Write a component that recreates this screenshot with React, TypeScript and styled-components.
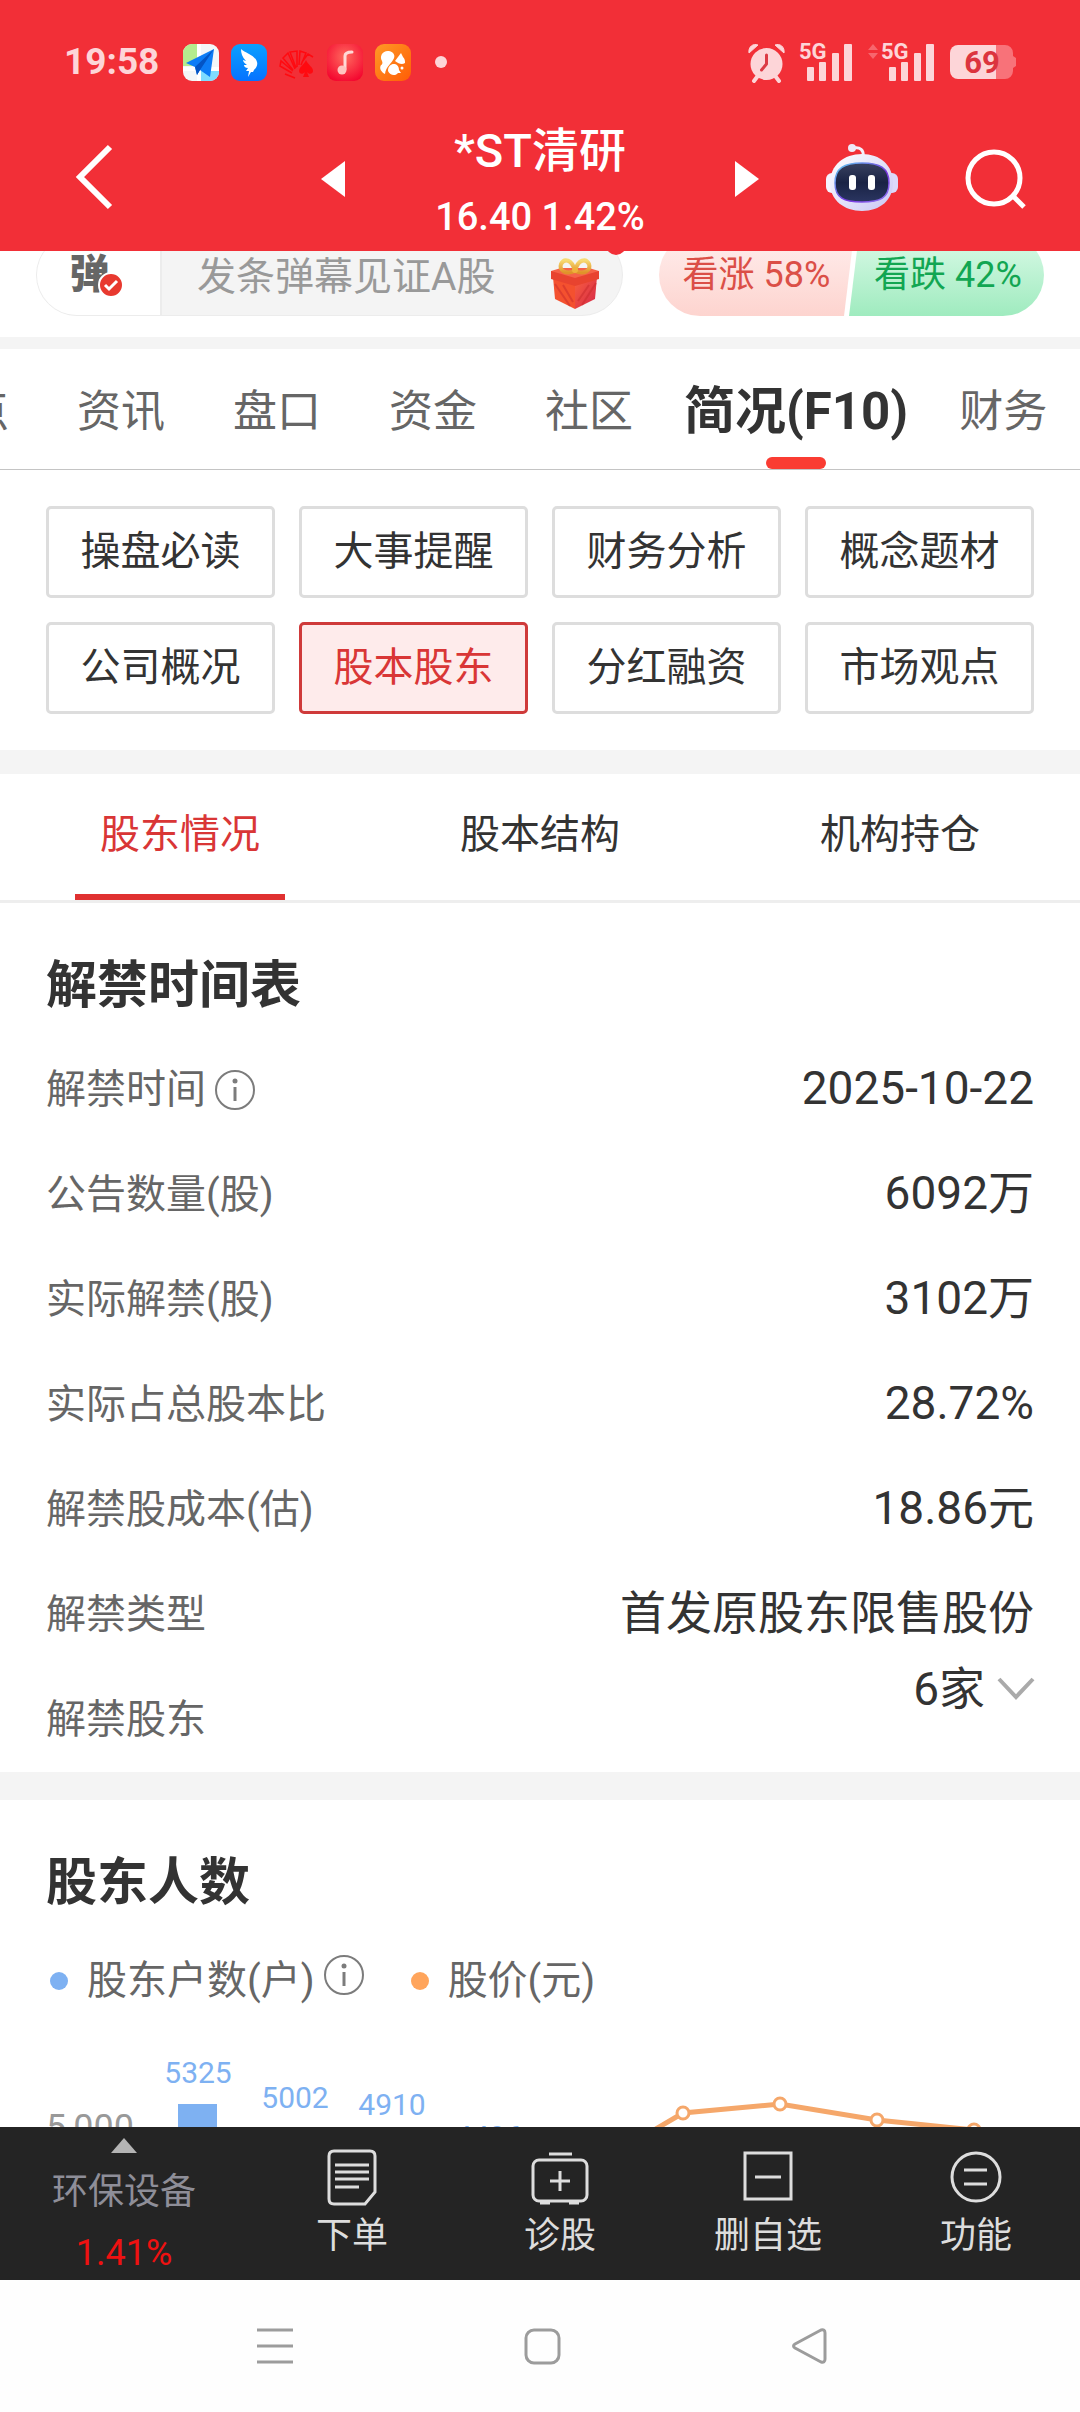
import React from "react";
import styled, { createGlobalStyle } from "styled-components";

const fontStack = `Roboto, "Noto Sans CJK SC", sans-serif`;

const color = {
  header: "#f22f37",
  status: "#fdd5d8",
  band: "#f4f4f4",
  text: "#333333",
  muted: "#666666",
  faint: "#999999",
  accent: "#e03131",
  blue: "#7eb1f2",
  orange: "#f5a76a",
  dock: "#242424",
  dockText: "#dddddd",
};

const GlobalStyle = createGlobalStyle`
  *, *::before, *::after { box-sizing: border-box; }
  body { margin: 0; background: #ffffff; color: ${color.text}; font-family: ${fontStack}; }
  button, input { font: inherit; color: inherit; border: 0; padding: 0; margin: 0; background: none; }
  svg { display: block; flex: none; overflow: visible; }
  h2, dl, dt, dd { margin: 0; }
`;

const Screen = styled.div`
  display: flex;
  flex-direction: column;
  height: 100vh;
  overflow: hidden;
`;

/* ---------- header ---------- */

const Header = styled.header`
  flex: none;
  background: ${color.header};
  color: #ffffff;
`;

const StatusBar = styled.div`
  display: flex;
  align-items: center;
  justify-content: space-between;
  height: 104px;
  padding: 20px 64px 0;
  color: ${color.status};
`;

const StatusGroup = styled.div<{ $gap: number }>`
  display: flex;
  align-items: center;
  gap: ${(p) => p.$gap}px;
`;

const Clock = styled.time`
  margin-right: 12px;
  font-size: 37px;
  font-weight: 700;
  line-height: 44px;
`;

const MoreDot = styled.i`
  width: 12px;
  height: 12px;
  margin-left: 12px;
  border-radius: 50%;
  background: ${color.status};
`;

const NavBar = styled.div`
  display: grid;
  grid-template-columns: 1fr auto 1fr;
  align-items: center;
  height: 147px;
`;

const NavStart = styled.div`
  padding-left: 76px;
`;

const NavEnd = styled.div`
  display: flex;
  align-items: center;
  justify-content: flex-end;
  gap: 68px;
  padding-right: 54px;
`;

const StockSwitcher = styled.div`
  display: flex;
  align-items: center;
  justify-content: space-between;
  width: 438px;
`;

const IconButton = styled.button`
  display: flex;
  align-items: center;
  justify-content: center;
`;

const StockTitle = styled.div`
  display: flex;
  flex-direction: column;
  align-items: center;
  padding-top: 12px;
  font-weight: 500;
  line-height: 66px;
  white-space: nowrap;
`;

const StockName = styled.span`
  font-size: 47px;
`;

const StockPrice = styled.span`
  font-size: 38px;
`;

/* ---------- scrolling content ---------- */

const Content = styled.main`
  flex: 1;
  min-height: 0;
  overflow: hidden;
`;

const Band = styled.div<{ $size: number }>`
  height: ${(p) => p.$size}px;
  background: ${color.band};
`;

const BarrageStrip = styled.section`
  display: flex;
  align-items: flex-end;
  gap: 36px;
  height: 86px;
  padding: 0 36px 21px;
  overflow: hidden;
`;

const BarragePill = styled.div`
  position: relative;
  display: flex;
  align-items: center;
  flex: 1;
  min-width: 0;
  height: 82px;
  padding-right: 23px;
  border: 1px solid #ececec;
  border-radius: 41px;
  background: ${color.band};
`;

const BarrageToggle = styled.button`
  align-self: stretch;
  width: 125px;
  padding-right: 18px;
  border-right: 2px solid #ececec;
  border-radius: 41px 0 0 41px;
  background: #ffffff;
  color: ${color.muted};
  font-size: 40px;
  font-weight: 900;
  line-height: 44px;
`;

const ToggleLabel = styled.span`
  position: relative;
  display: inline-block;
`;

const CheckBadge = styled.svg`
  position: absolute;
  left: 28px;
  top: 19px;
`;

const BarrageInput = styled.input`
  flex: 1;
  min-width: 0;
  padding: 4px 0 0 35px;
  outline: none;
  font-size: 39px;
  line-height: 48px;
  &::placeholder { color: ${color.faint}; opacity: 1; }
`;

const UnreadDot = styled.i`
  position: absolute;
  right: -4px;
  top: 0;
  width: 20px;
  height: 20px;
  border-radius: 50%;
  background: ${color.header};
`;

const VoteGroup = styled.div`
  display: flex;
`;

const VoteButton = styled.button<{ $kind: "up" | "down" }>`
  width: 195px;
  height: 82px;
  font-size: 36px;
  line-height: 44px;
  white-space: nowrap;
  ${(p) =>
    p.$kind === "up"
      ? `color: #db4f47;
         border-radius: 41px 0 0 41px;
         background: linear-gradient(#ffeeed, #fdd4cf);
         clip-path: polygon(0 0, 100% 0, calc(100% - 10px) 100%, 0 100%);`
      : `color: #12a652;
         margin-left: -5px;
         padding-left: 3px;
         border-radius: 0 41px 41px 0;
         background: linear-gradient(#dbfae8, #9febbf);
         clip-path: polygon(10px 0, 100% 0, 100% 100%, 0 100%);`}
`;

const MainTabs = styled.nav`
  display: flex;
  height: 121px;
  margin-left: -69px;
  border-bottom: 1px solid #c4c4c4;
`;

const MainTab = styled.button<{ $active?: boolean }>`
  position: relative;
  flex: none;
  padding: 6px ${(p) => (p.$active ? 17 : 34)}px 0;
  color: ${(p) => (p.$active ? color.text : color.muted)};
  font-size: ${(p) => (p.$active ? 51 : 44)}px;
  font-weight: ${(p) => (p.$active ? 700 : 400)};
  line-height: 60px;
  white-space: nowrap;
  ${(p) =>
    p.$active &&
    `&::after {
      content: "";
      position: absolute;
      left: 50%;
      bottom: 0;
      width: 60px;
      height: 12px;
      margin-left: -30px;
      border-radius: 6px;
      background: #fa3c32;
    }`}
`;

const TopicGrid = styled.nav`
  display: grid;
  grid-template-columns: repeat(4, 1fr);
  gap: 24px;
  padding: 36px 46px;
`;

const TopicButton = styled.button<{ $active: boolean }>`
  height: 92px;
  border: 3px solid ${(p) => (p.$active ? "#cf3a3a" : "#dddddd")};
  border-radius: 5px;
  background: ${(p) => (p.$active ? "#feebeb" : "#ffffff")};
  color: ${(p) => (p.$active ? "#d93636" : color.text)};
  font-size: 40px;
  line-height: 48px;
`;

const SubTabs = styled.nav`
  display: grid;
  grid-template-columns: repeat(3, 1fr);
  justify-items: center;
  height: 129px;
  border-bottom: 3px solid #eeeeee;
`;

const SubTab = styled.button<{ $active: boolean }>`
  width: 210px;
  padding-top: 2px;
  border-bottom: 6px solid ${(p) => (p.$active ? color.accent : "transparent")};
  color: ${(p) => (p.$active ? "#d93636" : color.text)};
  font-size: 40px;
  line-height: 48px;
`;

const SectionTitle = styled.h2`
  padding: 53px 46px 21px;
  font-size: 51px;
  font-weight: 700;
  line-height: 60px;
`;

const UnlockList = styled.dl`
  padding: 0 46px;
`;

const UnlockRow = styled.div`
  display: flex;
  justify-content: space-between;
  align-items: center;
  height: 105px;
`;

const RowLabel = styled.dt`
  display: flex;
  align-items: center;
  gap: 9px;
  color: ${color.muted};
  font-size: 40px;
  line-height: 48px;
`;

const RowValue = styled.dd<{ $top?: boolean }>`
  align-self: ${(p) => (p.$top ? "flex-start" : "auto")};
  padding-bottom: 3px;
  font-size: 46px;
  line-height: 44px;
`;

const ExpandButton = styled.button`
  display: flex;
  align-items: center;
  gap: 13px;
`;

const Legend = styled.div`
  display: flex;
  align-items: center;
  gap: 47px;
  height: 94px;
  padding: 0 50px;
  color: ${color.muted};
  font-size: 40px;
  line-height: 48px;
`;

const LegendItem = styled.div`
  display: flex;
  align-items: center;
`;

const LegendDot = styled.i<{ $fill: string }>`
  width: 18px;
  height: 18px;
  margin-right: 19px;
  border-radius: 50%;
  background: ${(p) => p.$fill};
`;

const LegendInfo = styled.span`
  margin-left: 9px;
  padding-bottom: 12px;
`;

const Chart = styled.svg`
  width: 100%;
  height: auto;
  font-family: ${fontStack};
`;

/* ---------- bottom bars ---------- */

const Dock = styled.nav`
  position: relative;
  display: grid;
  grid-template-columns: 31fr repeat(4, 26fr);
  flex: none;
  height: 153px;
  background: ${color.dock};
  color: ${color.dockText};
  font-size: 36px;
  line-height: 44px;
`;

const SectorButton = styled.button`
  display: flex;
  flex-direction: column;
  align-items: center;
  padding-top: 11px;
`;

const SectorName = styled.span`
  margin-top: 17px;
  color: #8e8e98;
`;

const SectorChange = styled.span`
  margin-top: 17px;
  color: #ee1111;
`;

const DockButton = styled.button`
  display: flex;
  flex-direction: column;
  align-items: center;
  gap: 9px;
  padding-top: 22px;
`;

const SystemNav = styled.nav`
  display: flex;
  align-items: center;
  justify-content: center;
  gap: 231px;
  flex: none;
  height: 132px;
  padding-left: 4px;
  background: #fefefe;
`;

/* ---------- drawings ---------- */

const MapAppIcon = () => (
  <svg width="36" height="37" viewBox="0 0 36 37">
    <clipPath id="mapClip"><rect width="36" height="37" rx="9" /></clipPath>
    <g clipPath="url(#mapClip)">
      <rect width="36" height="37" fill="#f3f6f8" />
      <path d="M0 0h14v22H0z" fill="#b5ec8e" />
      <path d="M18 27h18v10H16z" fill="#7fdcff" />
      <path d="M14 0h4v37h-4zM0 23h36v4H0z" fill="#ffffff" />
      <path d="M31 5L3 19l9 4 2 8 3-5 10 7z" fill="#0d7cf6" />
      <path d="M31 5L12 23l2 8 3-5z" fill="#0454c4" />
    </g>
  </svg>
);

const WingAppIcon = () => (
  <svg width="36" height="37" viewBox="0 0 36 37">
    <defs>
      <linearGradient id="wing" x1="0" y1="0" x2="0" y2="1">
        <stop offset="0" stopColor="#0aa0ff" />
        <stop offset="1" stopColor="#0672ff" />
      </linearGradient>
    </defs>
    <rect width="36" height="37" rx="9" fill="url(#wing)" />
    <path d="M10 5c4 4 14 6 16 13 1 3-1 6-3 8l-1 2h-2l-3 5 1-6h-3l2-3c-3 0-4-2-4-3l3 0c-3-2-4-4-4-5l3 1c-4-4-5-8-5-12z" fill="#ffffff" />
  </svg>
);

const FanAppIcon = () => (
  <svg width="36" height="37" viewBox="0 0 36 37" fill="none" stroke="#ff0a10" strokeWidth="1.500">
    <path d="M16 34L6 30M13 29L1 22l1-5 12 10M14 26L4 14l5-5 7 16M17 24L11 8l7-1 0 16M20 21l1-14 6 2-5 12M23 18l6-8 5 3" />
    <path d="M27 16c2 5 7 7 7 11 0 3-4 4-6 1l2 5h-6l2-5c-2 3-6 2-6-1 0-4 5-6 7-11z" fill="#ff0a10" stroke="none" />
  </svg>
);

const MusicAppIcon = () => (
  <svg width="36" height="37" viewBox="0 0 36 37">
    <defs>
      <radialGradient id="music" cx=".5" cy=".35" r=".7">
        <stop offset="0" stopColor="#ff6a5e" />
        <stop offset="1" stopColor="#f4062f" />
      </radialGradient>
    </defs>
    <rect width="36" height="37" rx="9" fill="url(#music)" />
    <path d="M25 8c-5 0-7 1-7 4v13" fill="none" stroke="#ffd9d6" strokeWidth="3" strokeLinecap="round" />
    <circle cx="15" cy="26" r="4.500" fill="#ffc4c0" />
  </svg>
);

const SquirrelAppIcon = () => (
  <svg width="36" height="37" viewBox="0 0 36 37">
    <defs>
      <linearGradient id="squirrel" x1="0" y1="0" x2="1" y2="1">
        <stop offset="0" stopColor="#ff9a26" />
        <stop offset="1" stopColor="#ff5c06" />
      </linearGradient>
    </defs>
    <rect width="36" height="37" rx="9" fill="url(#squirrel)" />
    <path d="M7 17c-3-5 1-11 7-10 5 1 7 5 4 9-3 5-7 7-8 14-4-2-6-6-4-9 1 0 2-2 1-4z" fill="#ffffff" />
    <path d="M20 17l6-8 2 4c2 2 2 4 2 6-3 2-6 1-10-2z" fill="#ffffff" />
    <path d="M13 27c0-9 11-9 11-1l2 3h-3c-2 3-8 3-10-2z" fill="#ffffff" />
    <circle cx="27" cy="24" r="1.500" fill="#ffffff" />
  </svg>
);

const AlarmIcon = () => (
  <svg width="37" height="39" viewBox="0 0 37 39">
    <circle cx="18.500" cy="21" r="16" fill={color.status} />
    <path d="M1 10C0 4 5 0 10 2zM36 10C37 4 32 0 27 2z" fill={color.status} stroke={color.status} strokeLinejoin="round" />
    <path d="M9 34l-3 4M28 34l3 4" stroke={color.status} strokeWidth="4" strokeLinecap="round" />
    <path d="M18.500 12v9l-5 6" fill="none" stroke="#dc3a44" strokeWidth="3" strokeLinecap="round" strokeLinejoin="round" />
  </svg>
);

const SignalIcon = ({ arrows }: { arrows?: boolean }) => {
  const x = arrows ? 15 : 0;
  return (
    <svg width={51 + x} height="38" viewBox={`${-x} 0 ${51 + x} 38`} fill={color.status}>
      {arrows && <path d="M-15 7l5-6 5 6zM-15 10l5 6 5-6z" fill="#f7666d" />}
      <text x="-2" y="16" fontSize="22" fontWeight="700" fontFamily={fontStack}>5G</text>
      <rect x="6" y="24" width="7" height="14" rx="1" />
      <rect x="18" y="19" width="7" height="19" rx="1" />
      <rect x="31" y="10" width="7" height="28" rx="1" />
      <rect x="43" y="1" width="8" height="37" rx="1" />
    </svg>
  );
};

const BatteryIcon = () => (
  <svg width="66" height="34" viewBox="0 0 66 34">
    <path d="M46 0h9a8 8 0 0 1 8 8v3l3 2v8l-3 2v3a8 8 0 0 1-8 8h-9z" fill="#f87279" />
    <path d="M8 0h38v34H8a8 8 0 0 1-8-8V8a8 8 0 0 1 8-8z" fill={color.status} />
    <text x="32" y="28" fontSize="31" fontWeight="700" textAnchor="middle" fill="#dc343e" fontFamily={fontStack}>69</text>
  </svg>
);

const BackIcon = () => (
  <svg width="38" height="66" viewBox="0 0 38 66">
    <path d="M34 2L4 32l30 30" fill="none" stroke="#ffffff" strokeWidth="6" />
  </svg>
);

const TriangleIcon = ({ right }: { right?: boolean }) => (
  <svg width="24" height="36" viewBox="0 0 24 36">
    <path d={right ? "M0 1l24 18L0 37z" : "M24 1L0 19l24 18z"} fill="#ffffff" />
  </svg>
);

const RobotIcon = () => (
  <svg width="72" height="68" viewBox="0 0 72 68">
    <defs>
      <linearGradient id="shell" x1="0" y1="0" x2="1" y2="1">
        <stop offset="0" stopColor="#ffffff" />
        <stop offset="1" stopColor="#c9c6f4" />
      </linearGradient>
      <linearGradient id="rim" x1="0" y1="0" x2="1" y2="1">
        <stop offset="0" stopColor="#5fd0f2" />
        <stop offset=".6" stopColor="#7a35e0" />
        <stop offset="1" stopColor="#8d7cf0" />
      </linearGradient>
      <linearGradient id="visor" x1="0" y1="0" x2="0" y2="1">
        <stop offset="0" stopColor="#39415f" />
        <stop offset=".5" stopColor="#1a2345" />
        <stop offset="1" stopColor="#2a3560" />
      </linearGradient>
    </defs>
    <path d="M28 4c6-1 10 2 9 8" fill="none" stroke="#f4f0fb" strokeWidth="3" />
    <circle cx="26" cy="4" r="4" fill="#efe9f8" />
    <rect x="0" y="29" width="14" height="20" rx="6" fill="#f5f3fe" />
    <rect x="58" y="29" width="14" height="20" rx="6" fill="#dcd9fa" />
    <path d="M36 10c18 0 31 11 31 29 0 17-13 28-31 28S4 56 4 39c0-18 14-29 32-29z" fill="url(#shell)" />
    <path d="M36 19c18 0 27 5 27 20s-9 19-27 19S9 54 9 39s9-20 27-20z" fill="url(#visor)" stroke="url(#rim)" strokeWidth="1.500" />
    <rect x="23" y="31" width="7" height="15" rx="3" fill="#ffffff" />
    <rect x="42" y="31" width="7" height="15" rx="3" fill="#ffffff" />
  </svg>
);

const SearchIcon = () => (
  <svg width="60" height="60" viewBox="0 0 60 60" fill="none" stroke="#ffffff" strokeWidth="5">
    <circle cx="28" cy="30" r="26" />
    <path d="M47 48l11 11" />
  </svg>
);

const GiftIcon = () => (
  <svg width="48" height="68" viewBox="0 0 48 68">
    <defs>
      <linearGradient id="giftFront" x1="0" y1="0" x2="1" y2="1">
        <stop offset="0" stopColor="#f9603f" />
        <stop offset="1" stopColor="#d42548" />
      </linearGradient>
      <linearGradient id="ribbon" x1="0" y1="0" x2="0" y2="1">
        <stop offset="0" stopColor="#f7da72" />
        <stop offset="1" stopColor="#e0922a" />
      </linearGradient>
    </defs>
    <path d="M2 36l22 7v25L4 58z" fill="#f4512f" />
    <path d="M46 36l-22 7v25l20-10z" fill="url(#giftFront)" />
    <path d="M4 43l15 22M12 44l10 17M45 42L31 64M38 44L27 60" stroke="#c92a2c" strokeWidth="2" opacity=".5" />
    <path d="M0 30h48v8l-24 7L0 38z" fill="#e8432f" />
    <path d="M0 30l10-3h28l10 3-24 7z" fill="#f56248" />
    <g fill="none" stroke="url(#ribbon)" strokeWidth="4">
      <path d="M24 30C14 34 8 29 10 23c3-6 11-5 14 7z" />
      <path d="M24 30c10 4 16-1 14-7-3-6-11-5-14 7z" />
    </g>
    <circle cx="24" cy="29" r="3" fill="#eeb23c" />
  </svg>
);

const InfoIcon = () => (
  <svg width="40" height="40" viewBox="0 0 40 40" role="img" aria-label="说明">
    <circle cx="20" cy="20" r="19" fill="none" stroke="#7c7c7c" strokeWidth="2" />
    <circle cx="20" cy="11" r="2.500" fill="#7c7c7c" />
    <path d="M20 17v14" stroke="#7c7c7c" strokeWidth="3" />
  </svg>
);

const ChevronDownIcon = () => (
  <svg width="36" height="24" viewBox="0 0 36 24">
    <path d="M1 2l17 18L35 2" fill="none" stroke="#aaaaaa" strokeWidth="4" />
  </svg>
);

const OrderIcon = () => (
  <svg width="50" height="56" viewBox="0 0 50 56" fill="none" stroke={color.dockText} strokeWidth="3">
    <path d="M7 2h36q5 0 5 5v36L38 55H7q-5 0-5-5V7q0-5 5-5z" />
    <path d="M8 16h34M8 23h34M8 30h34M8 38h24" />
  </svg>
);

const DiagnoseIcon = () => (
  <svg width="58" height="56" viewBox="0 0 58 56" fill="none" stroke={color.dockText} strokeWidth="3">
    <path d="M18 5h23" />
    <rect x="2" y="11" width="54" height="41" rx="6" />
    <path d="M9 54h10M38 54h10M19 32h20M29 22v20" />
  </svg>
);

const RemoveIcon = () => (
  <svg width="50" height="56" viewBox="0 0 50 56" fill="none" stroke={color.dockText} strokeWidth="3">
    <rect x="2" y="4" width="46" height="46" />
    <path d="M12 28h26" />
  </svg>
);

const FunctionIcon = () => (
  <svg width="52" height="56" viewBox="0 0 52 56" fill="none" stroke={color.dockText} strokeWidth="3">
    <circle cx="26" cy="28" r="24" />
    <path d="M14 21h23M14 35h23" />
  </svg>
);

/* ---------- holder chart ---------- */

const holders = [5325, 5002, 4910, 4496];
const prices = [
  { slot: 4, y: 142 },
  { slot: 5, y: 85 },
  { slot: 6, y: 76 },
  { slot: 7, y: 92 },
  { slot: 8, y: 102 },
];
const slotX = (slot: number) => 198 + slot * 97;
const holderY = (value: number) => Math.round(101 - (value - 5000) * 0.0774);

const HolderChart = () => (
  <Chart viewBox="0 0 1080 300" role="img" aria-label="股东户数与股价">
    <text x="46" y="112" fontSize="36" fill={color.faint}>5,000</text>
    {holders.map((value, slot) => (
      <g key={value} fill={color.blue}>
        <rect x={slotX(slot) - 20} y={holderY(value)} width="39" height={300 - holderY(value)} />
        <text x={slotX(slot)} y={holderY(value) - 21} fontSize="30" textAnchor="middle">{value}</text>
      </g>
    ))}
    <polyline
      points={prices.map((p) => `${slotX(p.slot)},${p.y}`).join(" ")}
      fill="none"
      stroke={color.orange}
      strokeWidth="5"
    />
    {prices.map((p) => (
      <circle key={p.slot} cx={slotX(p.slot)} cy={p.y} r="6" fill="#ffffff" stroke={color.orange} strokeWidth="3" />
    ))}
  </Chart>
);

/* ---------- page ---------- */

const mainTabs = ["点", "资讯", "盘口", "资金", "社区", "简况(F10)", "财务"];
const topics = ["操盘必读", "大事提醒", "财务分析", "概念题材", "公司概况", "股本股东", "分红融资", "市场观点"];
const subTabs = ["股东情况", "股本结构", "机构持仓"];
const unlockRows = [
  { label: "解禁时间", value: "2025-10-22", info: true },
  { label: "公告数量(股)", value: "6092万" },
  { label: "实际解禁(股)", value: "3102万" },
  { label: "实际占总股本比", value: "28.72%" },
  { label: "解禁股成本(估)", value: "18.86元" },
  { label: "解禁类型", value: "首发原股东限售股份" },
];
const dockItems = [
  { label: "下单", icon: <OrderIcon /> },
  { label: "诊股", icon: <DiagnoseIcon /> },
  { label: "删自选", icon: <RemoveIcon /> },
  { label: "功能", icon: <FunctionIcon /> },
];

export default function App() {
  return (
    <Screen>
      <GlobalStyle />
      <Header>
        <StatusBar>
          <StatusGroup $gap={12}>
            <Clock>19:58</Clock>
            <MapAppIcon />
            <WingAppIcon />
            <FanAppIcon />
            <MusicAppIcon />
            <SquirrelAppIcon />
            <MoreDot />
          </StatusGroup>
          <StatusGroup $gap={16}>
            <AlarmIcon />
            <SignalIcon />
            <SignalIcon arrows />
            <BatteryIcon />
          </StatusGroup>
        </StatusBar>
        <NavBar>
          <NavStart>
            <IconButton aria-label="返回"><BackIcon /></IconButton>
          </NavStart>
          <StockSwitcher>
            <IconButton aria-label="上一只"><TriangleIcon /></IconButton>
            <StockTitle>
              <StockName>*ST清研</StockName>
              <StockPrice>16.40 1.42%</StockPrice>
            </StockTitle>
            <IconButton aria-label="下一只"><TriangleIcon right /></IconButton>
          </StockSwitcher>
          <NavEnd>
            <IconButton aria-label="智能助手"><RobotIcon /></IconButton>
            <IconButton aria-label="搜索"><SearchIcon /></IconButton>
          </NavEnd>
        </NavBar>
      </Header>

      <Content>
        <BarrageStrip>
          <BarragePill>
            <BarrageToggle>
              <ToggleLabel>
                弹
                <CheckBadge width="26" height="26" viewBox="0 0 26 26">
                  <circle cx="13" cy="13" r="12" fill="#e8392f" stroke="#ffffff" strokeWidth="2" />
                  <path d="M7 13l4 4 8-8" fill="none" stroke="#ffffff" strokeWidth="3" />
                </CheckBadge>
              </ToggleLabel>
            </BarrageToggle>
            <BarrageInput aria-label="弹幕" placeholder="发条弹幕见证A股" />
            <IconButton aria-label="礼物"><GiftIcon /></IconButton>
            <UnreadDot />
          </BarragePill>
          <VoteGroup>
            <VoteButton $kind="up">看涨 58%</VoteButton>
            <VoteButton $kind="down">看跌 42%</VoteButton>
          </VoteGroup>
        </BarrageStrip>
        <Band $size={12} />

        <MainTabs>
          {mainTabs.map((label) => (
            <MainTab key={label} $active={label === "简况(F10)"}>{label}</MainTab>
          ))}
        </MainTabs>
        <TopicGrid>
          {topics.map((label) => (
            <TopicButton key={label} $active={label === "股本股东"}>{label}</TopicButton>
          ))}
        </TopicGrid>
        <Band $size={24} />

        <SubTabs>
          {subTabs.map((label) => (
            <SubTab key={label} $active={label === "股东情况"}>{label}</SubTab>
          ))}
        </SubTabs>

        <section>
          <SectionTitle>解禁时间表</SectionTitle>
          <UnlockList>
            {unlockRows.map((row) => (
              <UnlockRow key={row.label}>
                <RowLabel>
                  {row.label}
                  {row.info && <InfoIcon />}
                </RowLabel>
                <RowValue>{row.value}</RowValue>
              </UnlockRow>
            ))}
            <UnlockRow>
              <RowLabel>解禁股东</RowLabel>
              <RowValue $top>
                <ExpandButton>
                  6家
                  <ChevronDownIcon />
                </ExpandButton>
              </RowValue>
            </UnlockRow>
          </UnlockList>
        </section>
        <Band $size={28} />

        <section>
          <SectionTitle>股东人数</SectionTitle>
          <Legend>
            <LegendItem>
              <LegendDot $fill={color.blue} />
              股东户数(户)
              <LegendInfo><InfoIcon /></LegendInfo>
            </LegendItem>
            <LegendItem>
              <LegendDot $fill="#ffa55c" />
              股价(元)
            </LegendItem>
          </Legend>
          <HolderChart />
        </section>
      </Content>

      <Dock>
        <SectorButton>
          <svg width="26" height="15" viewBox="0 0 26 15">
            <path d="M13 0l13 15H0z" fill="#b4b4b4" />
          </svg>
          <SectorName>环保设备</SectorName>
          <SectorChange>1.41%</SectorChange>
        </SectorButton>
        {dockItems.map((item) => (
          <DockButton key={item.label}>
            {item.icon}
            {item.label}
          </DockButton>
        ))}
      </Dock>
      <SystemNav>
        <IconButton aria-label="最近任务">
          <svg width="36" height="36" viewBox="0 0 36 36">
            <path d="M0 2h36M0 18h36M0 34h36" stroke="#9c9c9c" strokeWidth="3" />
          </svg>
        </IconButton>
        <IconButton aria-label="主屏幕">
          <svg width="36" height="36" viewBox="0 0 36 36">
            <rect x="2" y="2" width="33" height="33" rx="8" fill="none" stroke="#9c9c9c" strokeWidth="3" />
          </svg>
        </IconButton>
        <IconButton aria-label="系统返回">
          <svg width="36" height="36" viewBox="0 0 36 36">
            <path d="M30 2L4 16q-3 2 0 4l26 14q4 1 4-3V5q0-4-4-3z" fill="none" stroke="#9c9c9c" strokeWidth="3" strokeLinejoin="round" />
          </svg>
        </IconButton>
      </SystemNav>
    </Screen>
  );
}
